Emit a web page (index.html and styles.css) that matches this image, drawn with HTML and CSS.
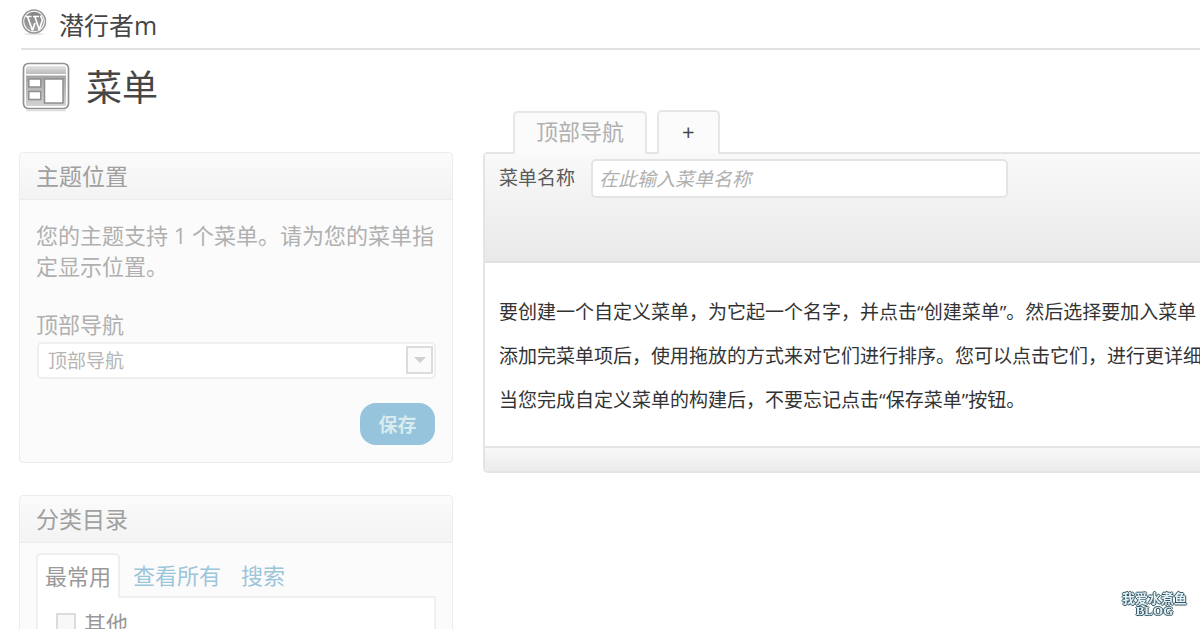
FILE: index.html
```html
<!DOCTYPE html>
<html lang="zh-CN">
<head>
<meta charset="utf-8">
<title>菜单</title>
<link rel="stylesheet" href="styles.css">
</head>
<body>
<header class="site-header">
  <svg class="site-logo" viewBox="0 0 26 26" aria-hidden="true">
    <defs>
      <linearGradient id="disc" x1="0" y1="0" x2="0" y2="1"><stop offset="0" stop-color="#858585"/><stop offset="1" stop-color="#a2a2a2"/></linearGradient>
    </defs>
    <ellipse cx="13" cy="25" rx="10" ry="1" fill="#e4e4e4"/>
    <circle cx="13" cy="12.500" r="11.500" fill="#fff" stroke="#969696" stroke-width="1.500"/>
    <circle cx="13" cy="12.500" r="9.800" fill="url(#disc)"/>
    <path d="M4.500 7.500h6M12 7.500h6M6.500 7.500l5 14M11.500 21.500L14 14M13.800 7.500l4.500 13.500M18.300 20.500l3-9c.600-2-1.800-3-1.600-5" fill="none" stroke="#fff" stroke-width="1.700"/>
  </svg>
  <span class="site-name">潜行者m</span>
</header>

<div class="page-heading">
  <svg class="heading-icon" viewBox="0 0 48 50" aria-hidden="true">
    <defs>
      <linearGradient id="bar" x1="0" y1="0" x2="0" y2="1"><stop offset="0" stop-color="#e4e4e4"/><stop offset="1" stop-color="#b9b9b9"/></linearGradient>
      <linearGradient id="pane" x1="0" y1="0" x2="0" y2="1"><stop offset="0" stop-color="#a5a5a5"/><stop offset="1" stop-color="#d2d2d2"/></linearGradient>
    </defs>
    <path d="M4 48.500h40" stroke="#ddd" stroke-width="1.500"/>
    <rect x="1.500" y="1.500" width="45" height="45" rx="5" fill="#fff" stroke="#929292" stroke-width="1.700"/>
    <path d="M4 12V6q0-2 2-2h36q2 0 2 2v6z" fill="url(#bar)"/>
    <path d="M4 13.500h40v29q0 1.500-2 1.500H6q-2 0-2-1.500z" fill="url(#pane)"/>
    <g fill="#fff" stroke="#8f8f8f" stroke-width="1.500">
      <rect x="6.800" y="17" width="12" height="8"/>
      <rect x="6.800" y="29.500" width="12" height="8"/>
      <rect x="22.500" y="17" width="18.500" height="24"/>
    </g>
  </svg>
  <h1 class="heading-text">菜单</h1>
</div>

<main class="columns">
  <aside class="sidebar">
    <section class="box">
      <h2 class="box-title">主题位置</h2>
      <div class="box-body">
        <p class="box-text">您的主题支持 1 个菜单。请为您的菜单指定显示位置。</p>
        <label class="field-label" for="location">顶部导航</label>
        <div class="select-wrap">
          <select class="select" id="location"><option>顶部导航</option></select>
          <span class="select-arrow"></span>
        </div>
        <div class="box-actions"><button class="save" type="button">保存</button></div>
      </div>
    </section>

    <section class="box">
      <h2 class="box-title">分类目录</h2>
      <div class="category-body">
        <nav class="category-tabs">
          <a class="category-tab category-tab-active" href="#common">最常用</a>
          <a class="category-tab" href="#all">查看所有</a>
          <a class="category-tab" href="#search">搜索</a>
        </nav>
        <div class="category-panel" id="common">
          <label class="check-row"><input class="check" type="checkbox">其他</label>
        </div>
      </div>
    </section>
  </aside>

  <section class="editor">
    <nav class="menu-tabs">
      <a class="menu-tab" href="#menu">顶部导航</a>
      <a class="menu-tab menu-tab-add" href="#new">+</a>
    </nav>
    <div class="menu-frame">
      <div class="menu-head">
        <label class="name-label" for="menu-name">菜单名称</label>
        <input class="name-input" id="menu-name" type="text" placeholder="在此输入菜单名称">
      </div>
      <div class="menu-body">
        <p class="menu-text">要创建一个自定义菜单，为它起一个名字，并点击“创建菜单”。然后选择要加入菜单</p>
        <p class="menu-text">添加完菜单项后，使用拖放的方式来对它们进行排序。您可以点击它们，进行更详细的</p>
        <p class="menu-text">当您完成自定义菜单的构建后，不要忘记点击“保存菜单”按钮。</p>
      </div>
      <div class="menu-foot"></div>
    </div>
  </section>
</main>

<div class="watermark"><span>我爱水煮鱼</span><span class="watermark-latin">BLOG</span></div>
</body>
</html>
```

FILE: styles.css
```css
* { box-sizing: border-box; }

html { overflow: hidden; }

body {
  margin: 0;
  height: 100vh;
  overflow: hidden;
  background: #fff;
  color: #333;
  font-family: "Open Sans", "Noto Sans CJK SC", sans-serif;
  font-size: 19px;
}

h1, h2, p { margin: 0; font-weight: 400; }
a { text-decoration: none; }
input, select, button { font-family: inherit; }

.site-header {
  display: flex;
  align-items: center;
  gap: 12px;
  height: 50px;
  margin-left: 21px;
  border-bottom: 2px solid #e2e2e2;
}
.site-logo { width: 26px; height: 26px; margin-bottom: 4px; }
.site-name { padding-top: 1px; font-size: 25px; line-height: 36px; color: #464646; }

.page-heading {
  display: flex;
  align-items: center;
  gap: 16px;
  height: 60px;
  padding: 14px 0 0 22px;
}
.heading-icon { width: 48px; height: 50px; }
.heading-text { padding-top: 2px; font-size: 36px; line-height: 50px; color: #464646; }

.columns {
  display: grid;
  grid-template-columns: 434px minmax(0, 1fr);
  gap: 30px;
  padding-left: 19px;
}

.sidebar {
  display: flex;
  flex-direction: column;
  gap: 32px;
  padding-top: 42px;
}
.box {
  border: 1px solid #ececec;
  border-radius: 4px;
  background: #fbfbfb;
}
.box-title {
  padding: 0 16px;
  border-bottom: 1px solid #ececec;
  border-radius: 4px 4px 0 0;
  background: linear-gradient(#fbfbfb, #f3f3f3);
  font-size: 23px;
  line-height: 46px;
  color: #a0a0a0;
}
.box-body { padding: 20px 16px 17px; color: #b0b0b0; }
.box-text { font-size: 22px; line-height: 31px; }
.field-label {
  display: block;
  margin-top: 26px;
  font-size: 22px;
  line-height: 32px;
}
.select-wrap { position: relative; margin: 2px 0 0 1px; }
.select {
  display: block;
  appearance: none;
  width: 100%;
  height: 37px;
  padding: 0 36px 0 9px;
  border: 2px solid #efefef;
  border-radius: 5px;
  background: #fff;
  color: #b5b5b5;
  font-size: 19px;
}
.select-arrow {
  position: absolute;
  top: 4px;
  right: 3px;
  display: grid;
  place-items: center;
  width: 27px;
  height: 28px;
  border: 2px solid #dcdcdc;
  background: #fbfbfb;
  pointer-events: none;
}
.select-arrow::after {
  content: "";
  border: 6px solid transparent;
  border-top-color: #d0d0d0;
  border-bottom: 0;
}
.box-actions { display: flex; justify-content: flex-end; margin-top: 24px; padding-right: 1px; }
.save {
  width: 75px;
  height: 42px;
  padding: 0;
  border: 0;
  border-radius: 16px;
  background: #95c4dc;
  color: #d8ebee;
  font-size: 19px;
  font-weight: 700;
}

.category-body { padding: 10px 16px; }
.category-tabs { display: flex; align-items: flex-start; }
.category-tab {
  padding: 1px 0 0 20px;
  color: #9bc6da;
  font-size: 22px;
  line-height: 42px;
}
.category-tab:nth-child(2) { padding-left: 13px; }
.category-tab-active {
  margin-bottom: -2px;
  padding: 0 7px;
  border: 2px solid #efefef;
  border-bottom: 0;
  border-radius: 5px 5px 0 0;
  background: #fff;
  color: #999;
}
.category-panel {
  height: 200px;
  padding: 11px 18px;
  border: 2px solid #efefef;
  border-top: 0;
  background: linear-gradient(#efefef, #efefef) 80px 0 / 100% 2px no-repeat #fff;
}
.check-row {
  display: flex;
  align-items: center;
  gap: 8px;
  font-size: 22px;
  line-height: 32px;
  color: #999;
}
.check {
  appearance: none;
  width: 20px;
  height: 20px;
  margin: 0;
  border: 2px solid #dcdcdc;
  background: #f8f8f8;
}

.menu-tabs {
  display: flex;
  align-items: flex-end;
  gap: 10px;
  height: 44px;
  padding-left: 30px;
}
.menu-tab {
  position: relative;
  height: 43px;
  padding: 0 21px;
  border: 2px solid #e6e6e6;
  border-bottom: 0;
  border-radius: 5px 5px 0 0;
  background: #fbfbfb;
  color: #b0b0b0;
  font-size: 22px;
  line-height: 36px;
}
.menu-tab-add {
  height: 44px;
  line-height: 38px;
  padding: 0 23px;
  color: #464646;
}
.menu-frame {
  margin-top: -2px;
  border: 2px solid #e4e4e4;
  border-right: 0;
  border-radius: 5px 0 0 5px;
}
.menu-head {
  display: flex;
  align-items: flex-start;
  gap: 16px;
  height: 109px;
  padding: 5px 14px;
  border-bottom: 2px solid #e2e2e2;
  background: linear-gradient(#f9f9f9, #e9e9e9);
}
.name-label { line-height: 38px; color: #5a5a5a; }
.name-input {
  width: 417px;
  height: 39px;
  padding: 0 6px;
  border: 2px solid #e4e4e4;
  border-radius: 5px;
  background: #fff;
  font-size: 19px;
}
.name-input::placeholder { color: #b0b0b0; font-style: italic; opacity: 1; }
.menu-body { padding: 27px 14px 24px; overflow: hidden; }
.menu-text { line-height: 44px; white-space: nowrap; }
.menu-foot {
  height: 25px;
  border-top: 2px solid #e4e4e4;
  border-radius: 0 0 0 4px;
  background: linear-gradient(#f8f8f8, #ebebeb);
}

.watermark {
  position: fixed;
  right: 13px;
  bottom: 12px;
  display: flex;
  flex-direction: column;
  align-items: center;
  color: #e4f1f4;
  font-family: "Liberation Serif", "Noto Sans CJK SC", serif;
  font-size: 13px;
  font-weight: 700;
  line-height: 13px;
  text-shadow: 1px 0 #31586a, -1px 0 #31586a, 0 1px #31586a, 0 -1px #31586a, 0 0 3px #d8d2b0;
}
.watermark-latin { line-height: 12px; }
```
